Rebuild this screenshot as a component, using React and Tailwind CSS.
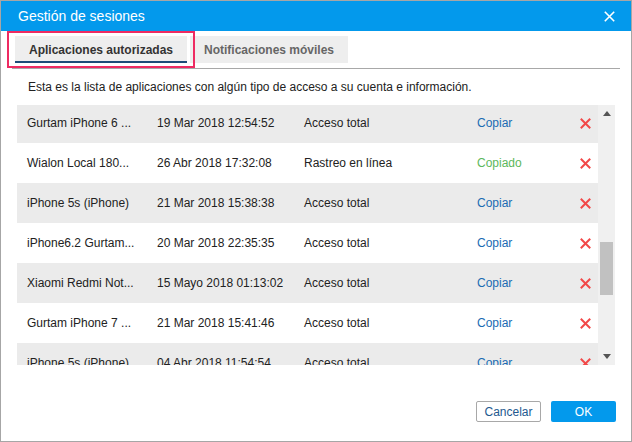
import React from "react";

const rows = [
  { name: "Gurtam iPhone 6 ...", date: "19 Mar 2018 12:54:52", access: "Acceso total", copied: false },
  { name: "Wialon Local 180...", date: "26 Abr 2018 17:32:08", access: "Rastreo en línea", copied: true },
  { name: "iPhone 5s (iPhone)", date: "21 Mar 2018 15:38:38", access: "Acceso total", copied: false },
  { name: "iPhone6.2 Gurtam...", date: "20 Mar 2018 22:35:35", access: "Acceso total", copied: false },
  { name: "Xiaomi Redmi Not...", date: "15 Mayo 2018 01:13:02", access: "Acceso total", copied: false },
  { name: "Gurtam iPhone 7 ...", date: "21 Mar 2018 15:41:46", access: "Acceso total", copied: false },
  { name: "iPhone 5s (iPhone)", date: "04 Abr 2018 11:54:54", access: "Acceso total", copied: false },
];

function RedX() {
  return (
    <svg width="11" height="11" viewBox="0 0 11 11">
      <path d="M1.5 1.5 L9.5 9.5 M9.5 1.5 L1.5 9.5" stroke="#f24848" strokeWidth="2" strokeLinecap="square" />
    </svg>
  );
}

export default function App() {
  return (
    <div className="w-[632px] h-[442px] bg-white font-['Liberation_Sans',Arial,sans-serif] text-[12px] text-[#222]">
      <div className="relative w-full h-full border border-[#a6a6a6] flex flex-col">
        <div className="h-[30px] bg-[#0399ec] flex items-center justify-between pl-[17px] pr-[16px] shrink-0">
          <span className="text-white text-[14px]">Gestión de sesiones</span>
          <svg width="11" height="11" viewBox="0 0 11 11">
            <path d="M0.8 0.8 L10.2 10.2 M10.2 0.8 L0.8 10.2" stroke="white" strokeWidth="1.6" />
          </svg>
        </div>

        <div className="pl-[14px] pr-[11px] pt-[5px]">
          <div className="flex gap-[3px]">
            <div className="w-[172px] shrink-0 h-[27px] bg-[#eeeeee] flex items-center justify-center font-bold text-[#333] border-b-2 border-[#1c4c78] pt-[2px] whitespace-nowrap">
              Aplicaciones autorizadas
            </div>
            <div className="w-[158px] shrink-0 h-[27px] bg-[#eeeeee] flex items-center justify-center font-bold text-[#666] whitespace-nowrap">
              Notificaciones móviles
            </div>
          </div>
          <div className="mt-[5px] h-px bg-[#a8a8a8] -ml-[3px]" />
        </div>

        <div className="pl-[27px] pt-[11px] h-[36px] leading-[14px] text-[#222]">
          Esta es la lista de aplicaciones con algún tipo de acceso a su cuenta e información.
        </div>

        <div className="ml-[16px] flex h-[260px] w-[598px]">
          <div className="w-[581px] h-full overflow-hidden">
            <div className="-mt-[2px]">
              {rows.map((r, i) => (
                <div
                  key={i}
                  className={`h-[40px] flex items-center ${i % 2 === 0 ? "bg-[#ebebeb]" : "bg-white"}`}
                >
                  <span className="w-[140px] pl-[10px] truncate">{r.name}</span>
                  <span className="w-[147px]">{r.date}</span>
                  <span className="w-[173px]">{r.access}</span>
                  <span className={`w-[103px] ${r.copied ? "text-[#5cb85c]" : "text-[#1a6bb3]"}`}>
                    {r.copied ? "Copiado" : "Copiar"}
                  </span>
                  <RedX />
                </div>
              ))}
            </div>
          </div>
          <div className="w-[17px] h-full bg-[#f0f0f0] flex flex-col items-center">
            <div className="h-[17px] flex items-center justify-center">
              <svg width="8" height="5" viewBox="0 0 8 5"><path d="M0 5 L4 0 L8 5 Z" fill="#555" /></svg>
            </div>
            <div className="mt-[120px] w-[13px] h-[53px] bg-[#c1c1c1]" />
            <div className="flex-1" />
            <div className="h-[17px] flex items-center justify-center">
              <svg width="8" height="5" viewBox="0 0 8 5"><path d="M0 0 L4 5 L8 0 Z" fill="#555" /></svg>
            </div>
          </div>
        </div>

        <div className="flex justify-end gap-[10px] pr-[15px] mt-[36px]">
          <button className="w-[65px] h-[21px] border border-[#a8a8a8] rounded-[2px] bg-white text-[#23598f] text-[12px]">
            Cancelar
          </button>
          <button className="w-[65px] h-[21px] rounded-[2px] bg-[#0399ec] text-white text-[12px]">
            OK
          </button>
        </div>

        <div className="absolute left-[6px] top-[30px] w-[188px] h-[37px] border-2 border-[#ee2b62] pointer-events-none" />
      </div>
    </div>
  );
}
